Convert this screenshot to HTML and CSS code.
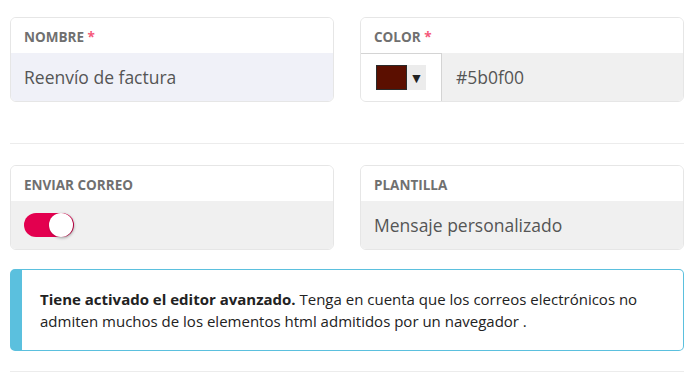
FILE: index.html
```html
<!DOCTYPE html>
<html lang="es">
<head>
  <meta charset="UTF-8" />
  <meta name="viewport" content="width=device-width, initial-scale=1.0"/>
  <title>Estado</title>
  <link rel="stylesheet" href="styles.css">
</head>
<body>

<div class="page">
  <div class="row">
    <div class="field">
      <div class="label">Nombre <span class="req">*</span></div>
      <div class="input focused">Reenvío de factura</div>
    </div>
    <div class="field">
      <div class="label">Color <span class="req">*</span></div>
      <div class="input color-input">
        <div class="picker">
          <div class="picker-box">
            <span class="swatch"></span>
            <span class="arrow">▼</span>
          </div>
        </div>
        <div class="color-value">#5b0f00</div>
      </div>
    </div>
  </div>

  <hr class="divider">

  <div class="row">
    <div class="field">
      <div class="label">Enviar correo</div>
      <div class="input">
        <label class="toggle">
          <span class="knob"></span>
        </label>
      </div>
    </div>
    <div class="field">
      <div class="label">Plantilla</div>
      <div class="input">Mensaje personalizado</div>
    </div>
  </div>

  <div class="alert">
    <strong>Tiene activado el editor avanzado.</strong> Tenga en cuenta que los correos electrónicos no admiten muchos de los elementos html admitidos por un navegador .
  </div>

  <hr class="divider bottom">
</div>

</body>
</html>
```

FILE: styles.css
```css
* {
  box-sizing: border-box;
}

body {
  margin: 0;
  background: #fff;
  font-family: "Open Sans", Arial, sans-serif;
  color: #333;
}

.page {
  padding: 17px 8px 0 10px;
}

.row {
  display: grid;
  grid-template-columns: 1fr 1fr;
  gap: 26px;
}

.field {
  border: 1px solid #e6e6e6;
  border-radius: 6px;
  overflow: hidden;
}

.label {
  height: 35px;
  padding: 11px 13px 0;
  font-size: 13.5px;
  font-weight: 700;
  text-transform: uppercase;
  color: #707070;
  line-height: 16px;
  background: #fff;
}

.req {
  color: #f5587a;
}

.input {
  height: 48px;
  padding: 0 13px;
  display: flex;
  align-items: center;
  background: #f0f0f0;
  font-size: 17.5px;
  color: #555;
}

.input.focused {
  background: #f0f1f8;
}

.color-input {
  padding: 0;
}

.picker {
  width: 81px;
  height: 100%;
  background: #fff;
  border-top: 1px solid #d4d4d4;
  border-right: 1px solid #d4d4d4;
  display: flex;
  align-items: center;
  padding-left: 15px;
}

.picker-box {
  display: flex;
  height: 25px;
  background: #ececec;
}

.swatch {
  width: 31px;
  height: 25px;
  background: #5b0f00;
  border: 1px solid #2a2a2a;
}

.arrow {
  width: 19px;
  font-size: 14px;
  line-height: 25px;
  text-align: center;
  color: #222;
}

.color-value {
  padding-left: 14px;
}

.toggle {
  position: relative;
  display: block;
  width: 50px;
  height: 24px;
  border-radius: 12px;
  background: #e3004f;
}

.knob {
  position: absolute;
  top: 0;
  right: 1px;
  width: 24px;
  height: 24px;
  border-radius: 50%;
  background: #fff;
  box-shadow: 1px 1px 3px rgba(0, 0, 0, 0.35);
}

.divider {
  margin: 41px 0 21px;
  border: none;
  border-top: 1px solid #ececec;
}

.alert {
  margin-top: 19px;
  border: 1px solid #5bc0de;
  border-left: 12px solid #5bc0de;
  border-radius: 5px;
  padding: 18px 18px 18px 18px;
  font-size: 15px;
  line-height: 22px;
  color: #222;
}

.alert strong {
  font-weight: 700;
}

.divider.bottom {
  margin: 20px 0 0;
}
```
